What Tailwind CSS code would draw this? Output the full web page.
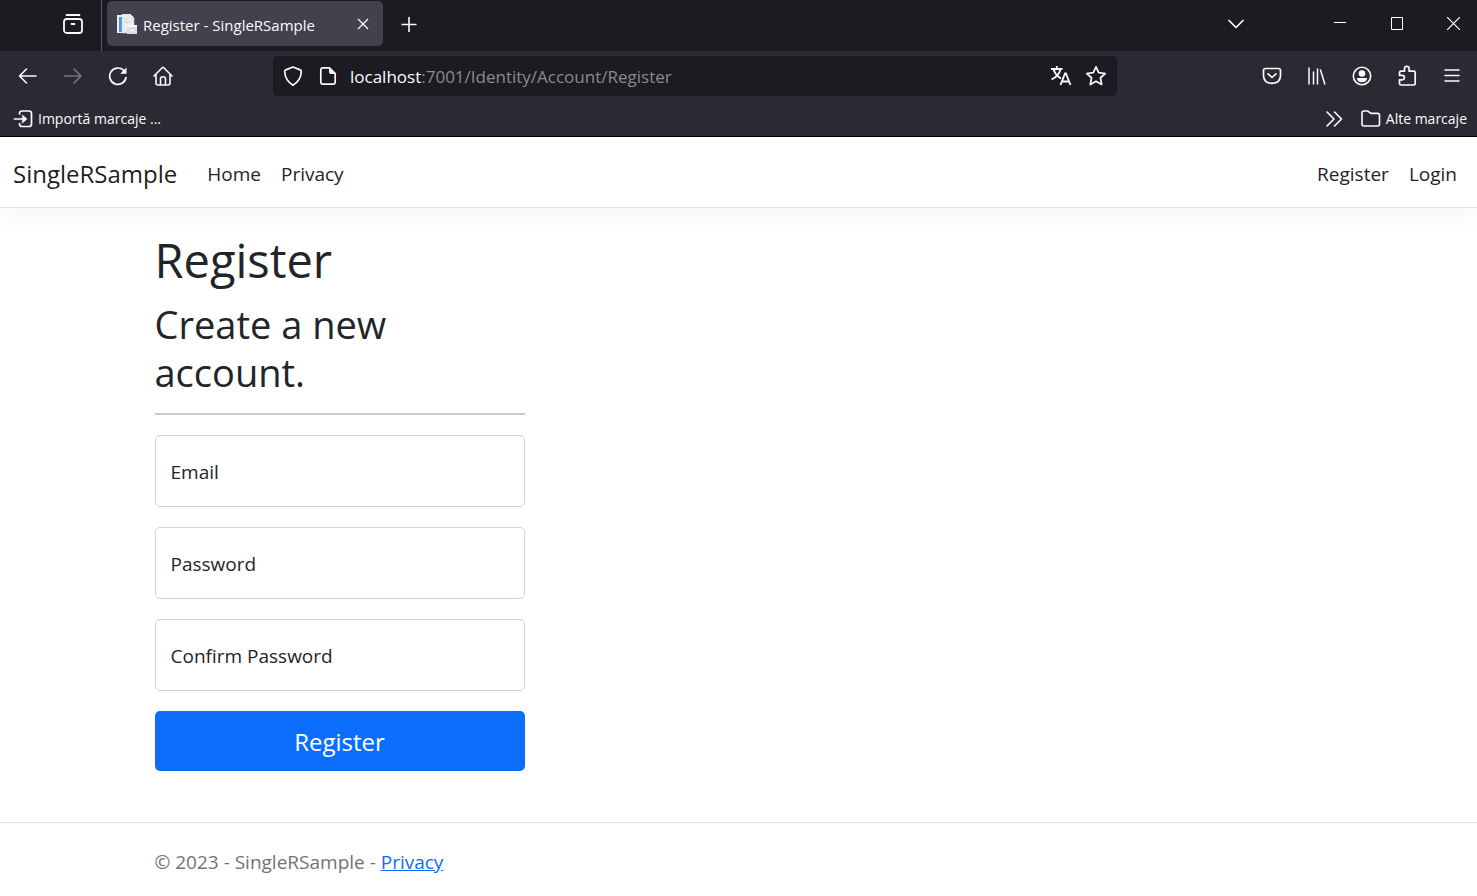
<!DOCTYPE html>
<html lang="ro">
<head>
<meta charset="utf-8">
<meta name="viewport" content="width=device-width, initial-scale=1">
<title>Register - SingleRSample</title>
<script src="https://cdn.jsdelivr.net/npm/@tailwindcss/browser@4"></script>
</head>
<body class="flex min-h-screen flex-col bg-white font-['Open_Sans','Noto_Sans',sans-serif] text-[19px] leading-7 text-[#212529]">

<!-- Browser window -->
<div class="border-b border-black bg-[#2b2a33] text-[#fbfbfe]">
  <!-- Tab strip -->
  <div class="flex h-[51px] items-center bg-[#1c1b22]">
    <div class="flex h-full w-[102px] items-center justify-end border-r border-[#5b5a62] pr-[17px] pb-[3px]">
      <button type="button" aria-label="Firefox View" class="block">
        <svg class="h-[22px] w-[22px]" viewBox="0 0 22 22" fill="none" stroke="currentColor" stroke-width="1.800" stroke-linecap="round"><path d="M4.500 2h13"/><rect x="2" y="6" width="18" height="14" rx="2.800"/><path d="M9.500 11h3"/></svg>
      </button>
    </div>
    <div class="mb-1 ml-[5px] flex h-[45px] w-[276px] items-center rounded-[5px] bg-[#42414d] pr-[12px] pl-[10px]">
      <svg class="h-5 w-5" viewBox="0 0 20 20"><path d="M0 1h10v18H0z" fill="#eef0f1"/><path d="M2 3h3v15H2z" fill="#3c9be0"/><path d="M5 0h8l4 4v15H5z" fill="#eceeee" stroke="#cbcfd2" stroke-width=".6"/><path d="M13 0v4h4" fill="#fff" stroke="#c2c7ca" stroke-width=".6"/><path d="M7 5h4M7 8h7" stroke="#d2d6d9"/><path d="M10 11h10v9H10z" fill="#dfe2e3"/><path d="M10 11h10v2H10z" fill="#f6f7f7"/><path d="M12 15h6v3h-6z" fill="#f0f2f2" stroke="#c3c8cb" stroke-width=".6"/></svg>
      <span class="ml-[6px] flex-1 pt-[2px] text-[15px] whitespace-nowrap">Register - SingleRSample</span>
      <button type="button" aria-label="Close tab"><svg class="h-4 w-4" viewBox="0 0 16 16" fill="none" stroke="currentColor" stroke-width="1.300"><path d="M3 3l10 10M13 3L3 13"/></svg></button>
    </div>
    <button type="button" aria-label="New tab" class="mb-1 ml-[17px]"><svg class="h-[18px] w-[18px]" viewBox="0 0 18 18" fill="none" stroke="currentColor" stroke-width="1.600"><path d="M9 2v15M1.500 9.500h15"/></svg></button>
    <div class="ml-auto flex h-[47px] items-center self-start">
      <button type="button" aria-label="List tabs" class="mr-[58px] flex w-[45px] justify-center"><svg class="h-5 w-5" viewBox="0 0 20 20" fill="none" stroke="currentColor" stroke-width="1.700" stroke-linecap="round" stroke-linejoin="round"><path d="M3 6.500l7 7 7-7"/></svg></button>
      <div class="flex gap-[10px]">
        <button type="button" aria-label="Minimize" class="flex w-[47px] justify-center"><svg class="h-[13px] w-[13px]" viewBox="0 0 13 13" stroke="#fff"><path d="M1 5.500h12"/></svg></button>
        <button type="button" aria-label="Maximize" class="flex w-[47px] justify-center"><svg class="h-[13px] w-[13px]" viewBox="0 0 13 13" stroke="#fff" fill="none"><path d="M1.500.500h11v12h-11z"/></svg></button>
        <button type="button" aria-label="Close" class="flex w-[47px] justify-center"><svg class="h-[13px] w-[13px]" viewBox="0 0 13 13" stroke="#fff" stroke-width="1.200"><path d="M0 0l13 13M13 0L0 13"/></svg></button>
      </div>
    </div>
  </div>

  <!-- Navigation toolbar -->
  <div class="flex h-[50px] items-center pr-[3px] pl-[5px]">
    <button type="button" aria-label="Back" class="flex w-[45px] justify-center"><svg class="h-5 w-5" viewBox="0 0 20 20" fill="none" stroke="currentColor" stroke-width="1.600" stroke-linecap="round" stroke-linejoin="round"><path d="M18 10H1.500M8.500 3l-7 7 7 7"/></svg></button>
    <button type="button" aria-label="Forward" disabled class="flex w-[45px] justify-center text-[#77767d]"><svg class="h-5 w-5" viewBox="0 0 20 20" fill="none" stroke="currentColor" stroke-width="1.600" stroke-linecap="round" stroke-linejoin="round"><path d="M1.500 10H18M11 3l7 7-7 7"/></svg></button>
    <button type="button" aria-label="Reload" class="flex w-[45px] justify-center"><svg class="h-5 w-5" viewBox="0 0 20 20" fill="none" stroke="currentColor" stroke-width="1.700" stroke-linecap="round"><path d="M18 11.500A8.200 8.200 0 1 1 15.500 4.200"/><path d="M18.500 1.500v6.300h-6.300z" fill="currentColor" stroke="none"/></svg></button>
    <button type="button" aria-label="Home" class="flex w-[45px] justify-center"><svg class="h-5 w-5" viewBox="0 0 20 20" fill="none" stroke="currentColor" stroke-width="1.600" stroke-linecap="round" stroke-linejoin="round"><path d="M1 10l8.200-8.200q.8-.7 1.600 0L19 10M3 8.500V17q0 2 2 2h10q2 0 2-2V8.500"/><path d="M7.500 18.500V13q0-2.200 2.500-2.200t2.500 2.200v5.500"/></svg></button>

    <div class="mr-[132px] ml-[88px] flex h-[40px] flex-1 items-center rounded-[5px] bg-[#1c1b22] px-[10px]">
      <svg class="h-5 w-5" viewBox="0 0 20 20" fill="none" stroke="currentColor" stroke-width="1.700" stroke-linejoin="round"><path d="M10 1l7.200 2.900q1.200.5 1.100 1.800Q17.800 14.500 10 19.200 2.200 14.500 1.700 5.700 1.600 4.400 2.800 3.900z"/></svg>
      <svg class="ml-[15px] h-5 w-5" viewBox="0 0 20 20" fill="none" stroke="currentColor" stroke-width="1.700" stroke-linejoin="round"><path d="M11.500 1.800H5q-2.200 0-2.200 2.200v12q0 2.200 2.200 2.200h10q2.200 0 2.200-2.200V7.500z"/><path d="M11 1.500V6q0 2 2 2h4.500z" fill="currentColor" stroke="none"/></svg>
      <div class="ml-3 flex-1 pt-[2px] text-[17px] whitespace-nowrap text-[#8a8a91]"><span class="text-[#fbfbfe]">localhost</span>:7001/Identity/Account/Register</div>
      <button type="button" aria-label="Translate"><svg class="h-[22px] w-[22px]" viewBox="0 0 22 22" fill="none" stroke="currentColor" stroke-width="1.800"><path d="M1 4h11.500M6.800 1v3M3.500 4q1.500 6 7.500 9.500M10.500 4Q9 11 1.500 14.500"/><path d="M10.500 20L15 8.500h.9L20.500 20M12 16.500h7"/></svg></button>
      <button type="button" aria-label="Bookmark this page" class="ml-[13px]"><svg class="h-[22px] w-[22px]" viewBox="0 0 22 22" fill="none" stroke="currentColor" stroke-width="1.700" stroke-linejoin="round"><path d="M11 1.800l2.700 5.900 6.500.8-4.800 4.400 1.300 6.600-5.700-3.200-5.700 3.200 1.300-6.600-4.800-4.400 6.500-.8z"/></svg></button>
    </div>

    <button type="button" aria-label="Pocket" class="flex w-[45px] justify-center"><svg class="h-5 w-5" viewBox="0 0 20 20" fill="none" stroke="currentColor" stroke-width="1.700" stroke-linecap="round" stroke-linejoin="round"><path d="M3.500 2.500h13q2 0 2 2v5q0 7.500-8.500 7.800-8.500-.3-8.500-7.800v-5q0-2 2-2z"/><path d="M6 7.800l4 3.700 4-3.700"/></svg></button>
    <button type="button" aria-label="Library" class="flex w-[45px] justify-center"><svg class="h-5 w-5" viewBox="0 0 20 20" fill="none" stroke="currentColor" stroke-width="1.500" stroke-linecap="round"><path d="M2 2v16M6.500 6v12M10.500 3v15M13.500 4l4.300 14"/></svg></button>
    <button type="button" aria-label="Account" class="flex w-[45px] justify-center"><svg class="h-5 w-5" viewBox="0 0 20 20"><circle cx="10" cy="10" r="8.700" fill="none" stroke="currentColor" stroke-width="1.600"/><circle cx="10" cy="7.500" r="3.300" fill="currentColor"/><path d="M4.800 12h10.400q-.6 4.200-5.200 4.200T4.800 12z" fill="currentColor"/></svg></button>
    <button type="button" aria-label="Extensions" class="flex w-[45px] justify-center"><svg class="h-[22px] w-[22px]" viewBox="0 0 22 22" fill="none" stroke="currentColor" stroke-width="1.700" stroke-linejoin="round"><path d="M8.500 6.200V3.600q0-2.300 2.300-2.300t2.300 2.300v2.600h4.600q1.500 0 1.500 1.500v10.800q0 1.500-1.500 1.500H5q-1.500 0-1.500-1.500v-3.700h2.700q2.200 0 2.200-2.200t-2.200-2.200H3.500V7.700q0-1.500 1.500-1.500z"/></svg></button>
    <button type="button" aria-label="Open application menu" class="flex w-[45px] justify-center"><svg class="h-5 w-5" viewBox="0 0 20 20" fill="none" stroke="currentColor" stroke-width="1.500" stroke-linecap="round"><path d="M3 4h14M3 9.500h14M3 15h14"/></svg></button>
  </div>

  <!-- Bookmarks toolbar -->
  <div class="flex h-[35px] items-center pr-[10px] pl-[13px] text-[14px]">
    <button type="button" class="flex items-center gap-[5px]">
      <svg class="h-5 w-5" viewBox="0 0 20 20" fill="none" stroke="currentColor" stroke-width="1.700" stroke-linecap="round" stroke-linejoin="round"><path d="M6.500 5V4.500q0-2.500 2.500-2.500h7q2.500 0 2.500 2.500v10.500q0 2.500-2.500 2.500H9q-2.500 0-2.500-2.500v-.5M1.500 10H11"/><path d="M9.500 6l4.500 4-4.500 4z" fill="currentColor" stroke-width=".5"/></svg>
      Importă marcaje ...
    </button>
    <button type="button" aria-label="Show more bookmarks" class="ml-auto"><svg class="h-5 w-5" viewBox="0 0 20 20" fill="none" stroke="currentColor" stroke-width="1.600" stroke-linecap="round" stroke-linejoin="round"><path d="M2 3l7 7-7 7M9.500 3l7 7-7 7"/></svg></button>
    <button type="button" class="ml-4 flex items-center gap-[5px]">
      <svg class="h-5 w-5" viewBox="0 0 20 20" fill="none" stroke="currentColor" stroke-width="1.600" stroke-linejoin="round"><path d="M1 15V4q0-2 2-2h3.200q.9 0 1.500.6l1.300 1.200q.6.600 1.500.6h6q2 0 2 2V15q0 2-2 2H3q-2 0-2-2z"/></svg>
      Alte marcaje
    </button>
  </div>
</div>

<!-- Site navigation -->
<header>
  <nav class="flex h-[71px] items-center border-b border-[#dee2e6] pt-1 pr-5 pl-[13px] shadow-[0_10px_20px_rgba(0,0,0,0.03)]">
    <a href="#" class="text-2xl text-black/90">SingleRSample</a>
    <ul class="flex flex-1 gap-5 pl-[30px]">
      <li><a href="#">Home</a></li>
      <li><a href="#">Privacy</a></li>
      <li class="ml-auto"><a href="#">Register</a></li>
      <li><a href="#">Login</a></li>
    </ul>
  </nav>
</header>

<main class="mx-auto w-full max-w-[1200px] flex-1 px-4 pt-[22px]">
  <h1 class="text-[47px] leading-[60px]">Register</h1>
  <div class="mt-[10px] grid gap-[29px] md:grid-cols-3">
    <form>
      <h2 class="text-[38px] leading-[48px]">Create a new account.</h2>
      <hr class="mt-[17px] mb-5 border-t-2 border-[#c8c9ca]">
      <div class="flex flex-col gap-5">
        <div class="relative">
          <input id="email" type="email" class="block h-[72px] w-full rounded-[5px] border border-[#ced4da] px-[15px]">
          <label for="email" class="pointer-events-none absolute inset-y-0 left-4 flex items-center pt-[2px]">Email</label>
        </div>
        <div class="relative">
          <input id="password" type="password" class="block h-[72px] w-full rounded-[5px] border border-[#ced4da] px-[15px]">
          <label for="password" class="pointer-events-none absolute inset-y-0 left-4 flex items-center pt-[2px]">Password</label>
        </div>
        <div class="relative">
          <input id="confirm" type="password" class="block h-[72px] w-full rounded-[5px] border border-[#ced4da] px-[15px]">
          <label for="confirm" class="pointer-events-none absolute inset-y-0 left-4 flex items-center pt-[2px]">Confirm Password</label>
        </div>
        <button type="submit" class="h-[60px] w-full rounded-[5px] bg-[#0d6efd] pt-[2px] text-2xl text-white">Register</button>
      </div>
    </form>
  </div>
</main>

<footer class="border-t border-[#dee2e6] text-[#6c757d]">
  <div class="mx-auto max-w-[1200px] px-4 pt-[5px] leading-[68px]">© 2023 - SingleRSample - <a href="#" class="text-[#0d6efd] underline">Privacy</a></div>
</footer>
</body>
</html>
